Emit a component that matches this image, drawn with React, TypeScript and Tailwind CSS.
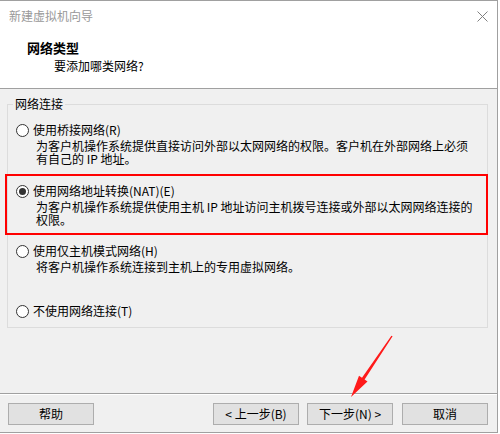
import React from "react";

type Option = {
  id: string;
  label: string;
  desc?: string[];
  className: string;
};

const options: Option[] = [
  {
    id: "bridged",
    label: "使用桥接网络(R)",
    desc: [
      "为客户机操作系统提供直接访问外部以太网网络的权限。客户机在外部网络上必须",
      "有自己的 IP 地址。",
    ],
    className: "mt-[10px]",
  },
  {
    id: "nat",
    label: "使用网络地址转换(NAT)(E)",
    desc: [
      "为客户机操作系统提供使用主机 IP 地址访问主机拨号连接或外部以太网网络连接的",
      "权限。",
    ],
    className: "mt-[18px]",
  },
  {
    id: "hostonly",
    label: "使用仅主机模式网络(H)",
    desc: ["将客户机操作系统连接到主机上的专用虚拟网络。"],
    className: "mt-[17px]",
  },
  {
    id: "none",
    label: "不使用网络连接(T)",
    className: "mt-[30px]",
  },
];

function Radio({ checked }: { checked: boolean }) {
  return (
    <span className="w-[13px] h-[13px] rounded-full border border-[#333333] bg-white flex items-center justify-center shrink-0">
      {checked && <span className="w-[7px] h-[7px] rounded-full bg-[#333333]" />}
    </span>
  );
}

function Button({ children }: { children: React.ReactNode }) {
  return (
    <button className="w-[86px] h-[22px] bg-[#e1e1e1] border border-[#adadad] text-[12px] leading-[16px] text-black flex items-center justify-center">
      {children}
    </button>
  );
}

export default function App() {
  const selected = "nat";

  return (
    <div className="relative w-[500px] h-[434px] bg-white font-['Noto_Sans_CJK_SC',sans-serif] text-black">
      <div className="w-[498px] h-[433px] border-t border-r border-b border-[#a0a0a0] flex flex-col">
        {/* header */}
        <div className="h-[88px] bg-white border-b border-[#a0a0a0] pt-[7px]">
          <div className="flex items-center justify-between pl-[9px] pr-[9px] h-[16px]">
            <span className="text-[12px] leading-[16px] text-[#999999]">新建虚拟机向导</span>
            <svg width="11" height="11" viewBox="0 0 11 11" className="text-[#808080]">
              <path d="M0.5 0.5L10.5 10.5M10.5 0.5L0.5 10.5" stroke="currentColor" strokeWidth="1" />
            </svg>
          </div>
          <div className="pl-[27px] mt-[16px] text-[13px] leading-[16px] font-bold">网络类型</div>
          <div className="pl-[54px] mt-[2px] text-[12px] leading-[16px]">要添加哪类网络?</div>
        </div>

        {/* body */}
        <div className="flex-1 bg-[#f0f0f0] flex flex-col pb-[7px]">
          <fieldset className="ml-[7px] mt-[7px] w-[481px] border border-[#dcdcdc] pl-[8px] pb-[8px]">
            <legend className="-ml-[3px] px-[2px] text-[12px] leading-[16px]">网络连接</legend>
            {options.map((o) => (
              <div key={o.id} className={o.className}>
                <div className="flex items-center h-[16px]">
                  <Radio checked={o.id === selected} />
                  <span className="ml-[4px] text-[12px] leading-[16px] whitespace-nowrap">{o.label}</span>
                </div>
                {o.desc && (
                  <div className="ml-[20px] mt-[1px] text-[12px] leading-[13px] whitespace-nowrap">
                    {o.desc.map((line) => (
                      <div key={line}>{line}</div>
                    ))}
                  </div>
                )}
              </div>
            ))}
          </fieldset>

          <div className="flex-1" />

          <div className="h-[2px] border-t border-[#a0a0a0] border-b border-b-white" />

          <div className="mt-[8px] flex items-center pl-[8px]">
            <Button>帮助</Button>
            <div className="ml-auto flex gap-[8px] pr-[9px]">
              <Button>&lt; 上一步(B)</Button>
              <Button>下一步(N) &gt;</Button>
              <div className="ml-[1px]">
                <Button>取消</Button>
              </div>
            </div>
          </div>
        </div>
      </div>

      {/* annotation: red highlight box */}
      <div className="absolute left-[5px] top-[174px] w-[483px] h-[61px] border-2 border-[#ff0000] pointer-events-none" />

      {/* annotation: red arrow */}
      <svg
        className="absolute left-[340px] top-[330px] pointer-events-none"
        width="60"
        height="72"
        viewBox="0 0 60 72"
      >
        <polygon
          points="11,67 27.5,51.5 24.6,49.6 52.6,6.3 51.4,5.7 22,47.8 19,45.8"
          fill="#ff1a1a"
        />
      </svg>
    </div>
  );
}
